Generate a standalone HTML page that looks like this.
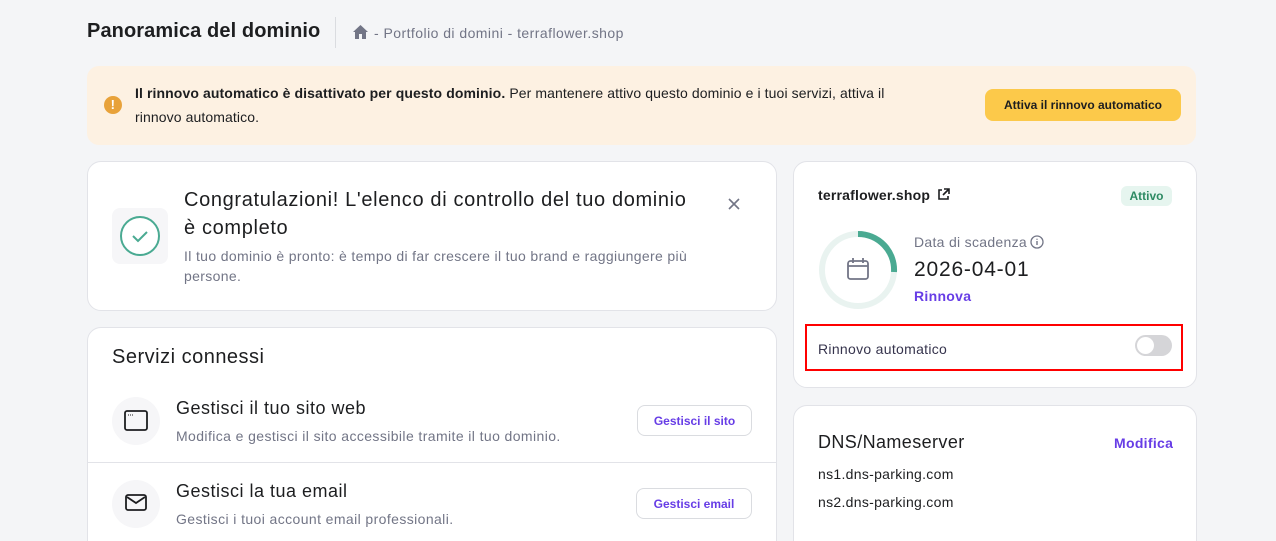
<!DOCTYPE html>
<html><head><meta charset="utf-8"><style>
*{box-sizing:border-box;margin:0;padding:0}
html,body{width:1276px;height:541px;overflow:hidden}
body{background:#f4f5f7;font-family:"Liberation Sans",sans-serif;color:#2f1c6a;position:relative;letter-spacing:0.3px}
.a{position:absolute;white-space:nowrap}
.card{position:absolute;background:#fff;border:1px solid #e2e3e8;border-radius:14px}
.dk{color:#1d1e20}
.gr{color:#727586}
.btn{position:absolute;border:1px solid #dadce0;border-radius:8px;background:#fff;color:#673de6;font-size:12px;font-weight:bold;display:flex;align-items:center;justify-content:center;letter-spacing:0}
</style></head><body>
<div class="a dk" style="left:87px;top:20px;font-size:20px;font-weight:bold;letter-spacing:0.1px">Panoramica del dominio</div>
<div class="a" style="left:335px;top:17px;width:1px;height:31px;background:#dadce0"></div>
<svg class="a" style="left:352px;top:24px" width="17" height="16" viewBox="0 0 17 16"><path d="M8.5 1L1 8h2v7h4v-5h3v5h4V8h2z" fill="#727586"/></svg>
<div class="a gr" style="left:374px;top:25px;font-size:14px;letter-spacing:0.45px">- Portfolio di domini - terraflower.shop</div>

<div class="a" style="left:87px;top:66px;width:1109px;height:79px;background:#fdf1e2;border-radius:12px"></div>
<div class="a" style="left:104px;top:96px;width:18px;height:18px;border-radius:50%;background:#e8a23a;color:#fff;font-size:13px;font-weight:bold;text-align:center;line-height:18px">!</div>
<div class="a dk" style="left:135px;top:81px;font-size:14px;line-height:24px;white-space:normal;width:780px;letter-spacing:0.1px"><b>Il rinnovo automatico è disattivato per questo dominio.</b> Per mantenere attivo questo dominio e i tuoi servizi, attiva il rinnovo automatico.</div>
<div class="a" style="left:985px;top:89px;width:196px;height:32px;background:#fcc94a;border-radius:8px;font-size:12px;font-weight:bold;color:#1d1e20;display:flex;align-items:center;justify-content:center;letter-spacing:0">Attiva il rinnovo automatico</div>

<div class="card" style="left:87px;top:161px;width:690px;height:150px"></div>
<div class="a" style="left:112px;top:208px;width:56px;height:56px;border-radius:8px;background:#f6f6f8"></div>
<svg class="a" style="left:119px;top:215px" width="42" height="42"><circle cx="21" cy="21" r="19" fill="#fff" stroke="#4aaa92" stroke-width="2"/><path d="M14 21l5 5 9-9" fill="none" stroke="#4aaa92" stroke-width="2"/></svg>
<div class="a dk" style="left:184px;top:186px;font-size:20px;line-height:28px;font-weight:500;letter-spacing:0.65px">Congratulazioni! L'elenco di controllo del tuo dominio<br>è completo</div>
<div class="a gr" style="left:184px;top:246px;font-size:14px;line-height:20px;letter-spacing:0.35px">Il tuo dominio è pronto: è tempo di far crescere il tuo brand e raggiungere più<br>persone.</div>
<svg class="a" style="left:727px;top:197px" width="14" height="14"><path d="M2 2l10 10M12 2L2 12" stroke="#727586" stroke-width="1.6"/></svg>

<div class="card" style="left:87px;top:327px;width:690px;height:230px"></div>
<div class="a dk" style="left:112px;top:346px;font-size:20px;font-weight:500;letter-spacing:0.5px">Servizi connessi</div>
<div class="a" style="left:112px;top:397px;width:48px;height:48px;border-radius:50%;background:#f6f6f8"></div>
<svg class="a" style="left:124px;top:410px" width="24" height="22"><rect x="1" y="1" width="22" height="19" rx="2" fill="none" stroke="#1d1e20" stroke-width="1.8"/><path d="M4 5h1M6 5h1M8 5h1" stroke="#1d1e20"/></svg>
<div class="a dk" style="left:176px;top:398px;font-size:18px;letter-spacing:0.5px">Gestisci il tuo sito web</div>
<div class="a gr" style="left:176px;top:428px;font-size:14px;letter-spacing:0.4px">Modifica e gestisci il sito accessibile tramite il tuo dominio.</div>
<div class="btn" style="left:637px;top:405px;width:115px;height:31px">Gestisci il sito</div>
<div class="a" style="left:88px;top:462px;width:688px;height:1px;background:#e2e3e8"></div>
<div class="a" style="left:112px;top:480px;width:48px;height:48px;border-radius:50%;background:#f6f6f8"></div>
<svg class="a" style="left:125px;top:494px" width="22" height="18"><rect x="1" y="1" width="20" height="15" rx="2" fill="none" stroke="#1d1e20" stroke-width="1.8"/><path d="M2 3l9 6 9-6" fill="none" stroke="#1d1e20" stroke-width="1.8"/></svg>
<div class="a dk" style="left:176px;top:481px;font-size:18px;letter-spacing:0.5px">Gestisci la tua email</div>
<div class="a gr" style="left:176px;top:511px;font-size:14px;letter-spacing:0.4px">Gestisci i tuoi account email professionali.</div>
<div class="btn" style="left:636px;top:488px;width:116px;height:31px">Gestisci email</div>

<div class="card" style="left:793px;top:161px;width:404px;height:227px"></div>
<div class="a dk" style="left:818px;top:187px;font-size:14px;font-weight:bold;letter-spacing:0.2px">terraflower.shop</div>
<svg class="a" style="left:937px;top:188px" width="13" height="13"><path d="M5 2H2v9h9V8M7 1h5v5M12 1L6 7" fill="none" stroke="#1d1e20" stroke-width="1.6"/></svg>
<div class="a" style="left:1121px;top:186px;width:51px;height:20px;border-radius:6px;background:#e6f5ef;color:#2d8a63;font-size:12px;font-weight:bold;text-align:center;line-height:20px;letter-spacing:0">Attivo</div>
<svg class="a" style="left:818px;top:230px" width="80" height="80"><circle cx="40" cy="40" r="36" fill="none" stroke="#e9f3f0" stroke-width="6"/><path d="M40 4A36 36 0 0 1 76 42" fill="none" stroke="#4aaa92" stroke-width="6"/><rect x="30" y="31" width="20" height="18" rx="2.5" fill="none" stroke="#727586" stroke-width="1.8"/><path d="M30 36h20M35 28v5M45 28v5" stroke="#727586" stroke-width="1.8"/></svg>
<div class="a gr" style="left:914px;top:234px;font-size:14px">Data di scadenza</div>
<svg class="a" style="left:1030px;top:235px" width="14" height="14"><circle cx="7" cy="7" r="6" fill="none" stroke="#727586" stroke-width="1.3"/><path d="M7 6v4M7 3.8v1" stroke="#727586" stroke-width="1.4"/></svg>
<div class="a dk" style="left:914px;top:258px;font-size:21px;font-weight:500;letter-spacing:0.8px">2026-04-01</div>
<div class="a" style="left:914px;top:288px;font-size:14px;font-weight:bold;color:#673de6">Rinnova</div>
<div class="a" style="left:805px;top:324px;width:378px;height:47px;border:2px solid #f00"></div>
<div class="a dk" style="left:818px;top:341px;font-size:14px;color:#36344d">Rinnovo automatico</div>
<div class="a" style="left:1135px;top:335px;width:37px;height:21px;border-radius:11px;background:#d5d5d8"></div>
<div class="a" style="left:1137px;top:337px;width:17px;height:17px;border-radius:50%;background:#fff"></div>

<div class="card" style="left:793px;top:405px;width:404px;height:160px"></div>
<div class="a dk" style="left:818px;top:432px;font-size:18px;font-weight:500;letter-spacing:0.4px">DNS/Nameserver</div>
<div class="a" style="left:1114px;top:435px;font-size:14px;font-weight:bold;color:#673de6">Modifica</div>
<div class="a dk" style="left:818px;top:466px;font-size:14px">ns1.dns-parking.com</div>
<div class="a dk" style="left:818px;top:494px;font-size:14px">ns2.dns-parking.com</div>
</body></html>
